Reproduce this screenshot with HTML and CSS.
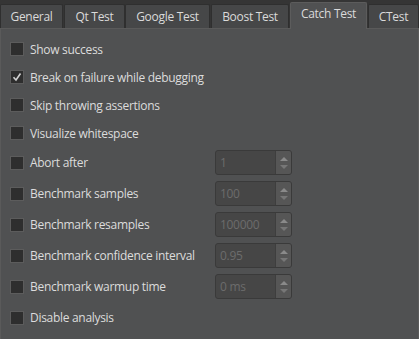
FILE: index.html
```html
<!DOCTYPE html>
<html lang="en">
<head>
  <meta charset="UTF-8" />
  <title>Test Settings</title>
  <link rel="stylesheet" href="styles.css">
</head>
<body>

<!-- Tab bar -->
<div class="tabs">
  <div class="tab t-general">General</div>
  <div class="tab t-qt">Qt Test</div>
  <div class="tab t-google">Google Test</div>
  <div class="tab t-boost">Boost Test</div>
  <div class="tab t-catch active">Catch Test</div>
  <div class="tab t-ctest">CTest</div>
</div>

<!-- Catch Test page -->
<div class="panel">
  <div class="row"><span class="check"></span><span class="label">Show success</span></div>
  <div class="row">
    <span class="check">
      <svg width="14" height="14" viewBox="0 0 14 14"><path d="M3.5 7.2 L6 10 L10.5 3.5" fill="none" stroke="#d2d2d2" stroke-width="1.6"/></svg>
    </span>
    <span class="label">Break on failure while debugging</span>
  </div>
  <div class="row"><span class="check"></span><span class="label">Skip throwing assertions</span></div>
  <div class="row"><span class="check"></span><span class="label">Visualize whitespace</span></div>

  <div class="row tall">
    <span class="check"></span><span class="label">Abort after</span>
    <div class="spin"><span class="value">1</span><span class="arrows"><i class="up"></i><i class="down"></i></span></div>
  </div>
  <div class="row tall">
    <span class="check"></span><span class="label">Benchmark samples</span>
    <div class="spin"><span class="value">100</span><span class="arrows"><i class="up"></i><i class="down"></i></span></div>
  </div>
  <div class="row tall">
    <span class="check"></span><span class="label">Benchmark resamples</span>
    <div class="spin"><span class="value">100000</span><span class="arrows"><i class="up"></i><i class="down"></i></span></div>
  </div>
  <div class="row tall">
    <span class="check"></span><span class="label">Benchmark confidence interval</span>
    <div class="spin"><span class="value">0.95</span><span class="arrows"><i class="up"></i><i class="down"></i></span></div>
  </div>
  <div class="row tall">
    <span class="check"></span><span class="label">Benchmark warmup time</span>
    <div class="spin"><span class="value">0 ms</span><span class="arrows"><i class="up"></i><i class="down"></i></span></div>
  </div>
  <div class="row tall"><span class="check"></span><span class="label">Disable analysis</span></div>
</div>

</body>
</html>
```

FILE: styles.css
```css
body {
  margin: 0;
  background: #353535;
  font-family: "Open Sans", "Noto Sans", sans-serif;
  font-size: 12px;
  letter-spacing: -0.3px;
  color: #dcdcdc;
  width: 419px;
  height: 339px;
  overflow: hidden;
}
.tabs {
  height: 28px;
  position: relative;
}
.tab {
  position: absolute;
  top: 4px;
  height: 24px;
  box-sizing: border-box;
  background: #464748;
  border: 1px solid #2f2f2f;
  border-bottom: none;
  border-radius: 2px 2px 0 0;
  text-align: center;
  line-height: 24px;
  color: #dadada;
}
.t-general { left: 0; width: 63px; }
.t-qt { left: 64px; width: 61px; }
.t-google { left: 125px; width: 85px; }
.t-boost { left: 211px; width: 78px; }
.t-catch { left: 290px; width: 77px; }
.t-ctest { left: 368px; width: 51px; }
.tab.active {
  top: 2px;
  height: 27px;
  line-height: 22px;
  background: #505152;
  border-color: #5c5c5c;
  z-index: 1;
}
.panel {
  height: 311px;
  box-sizing: border-box;
  background: #505152;
  border: 1px solid #5a5a5a;
  border-bottom: none;
  padding-top: 6px;
}
.row {
  height: 28px;
  display: flex;
  align-items: center;
  padding-left: 9px;
}
.row.tall {
  height: 31px;
}
.check {
  width: 14px;
  height: 14px;
  box-sizing: border-box;
  background: #2e2e2e;
  border: 1px solid #5c5c5c;
  margin-right: 6px;
  position: relative;
}
.check svg {
  position: absolute;
  left: -1px;
  top: -1px;
}
.label {
  flex: 1;
}
.spin {
  width: 77px;
  height: 25px;
  box-sizing: border-box;
  margin-right: 126px;
  display: flex;
  background: #464646;
  border: 1px solid #3a3a3a;
  border-radius: 3px;
  overflow: hidden;
}
.value {
  flex: 1;
  padding-left: 4px;
  line-height: 23px;
  color: #6c6c6c;
}
.arrows {
  width: 15px;
  background: #565656;
  border-left: 1px solid #3e3e3e;
  display: flex;
  flex-direction: column;
  align-items: center;
  justify-content: center;
  gap: 4px;
}
.arrows i {
  width: 0;
  height: 0;
  border-left: 4px solid transparent;
  border-right: 4px solid transparent;
}
.arrows .up {
  border-bottom: 4px solid #8a8a8a;
}
.arrows .down {
  border-top: 4px solid #777;
}
```
